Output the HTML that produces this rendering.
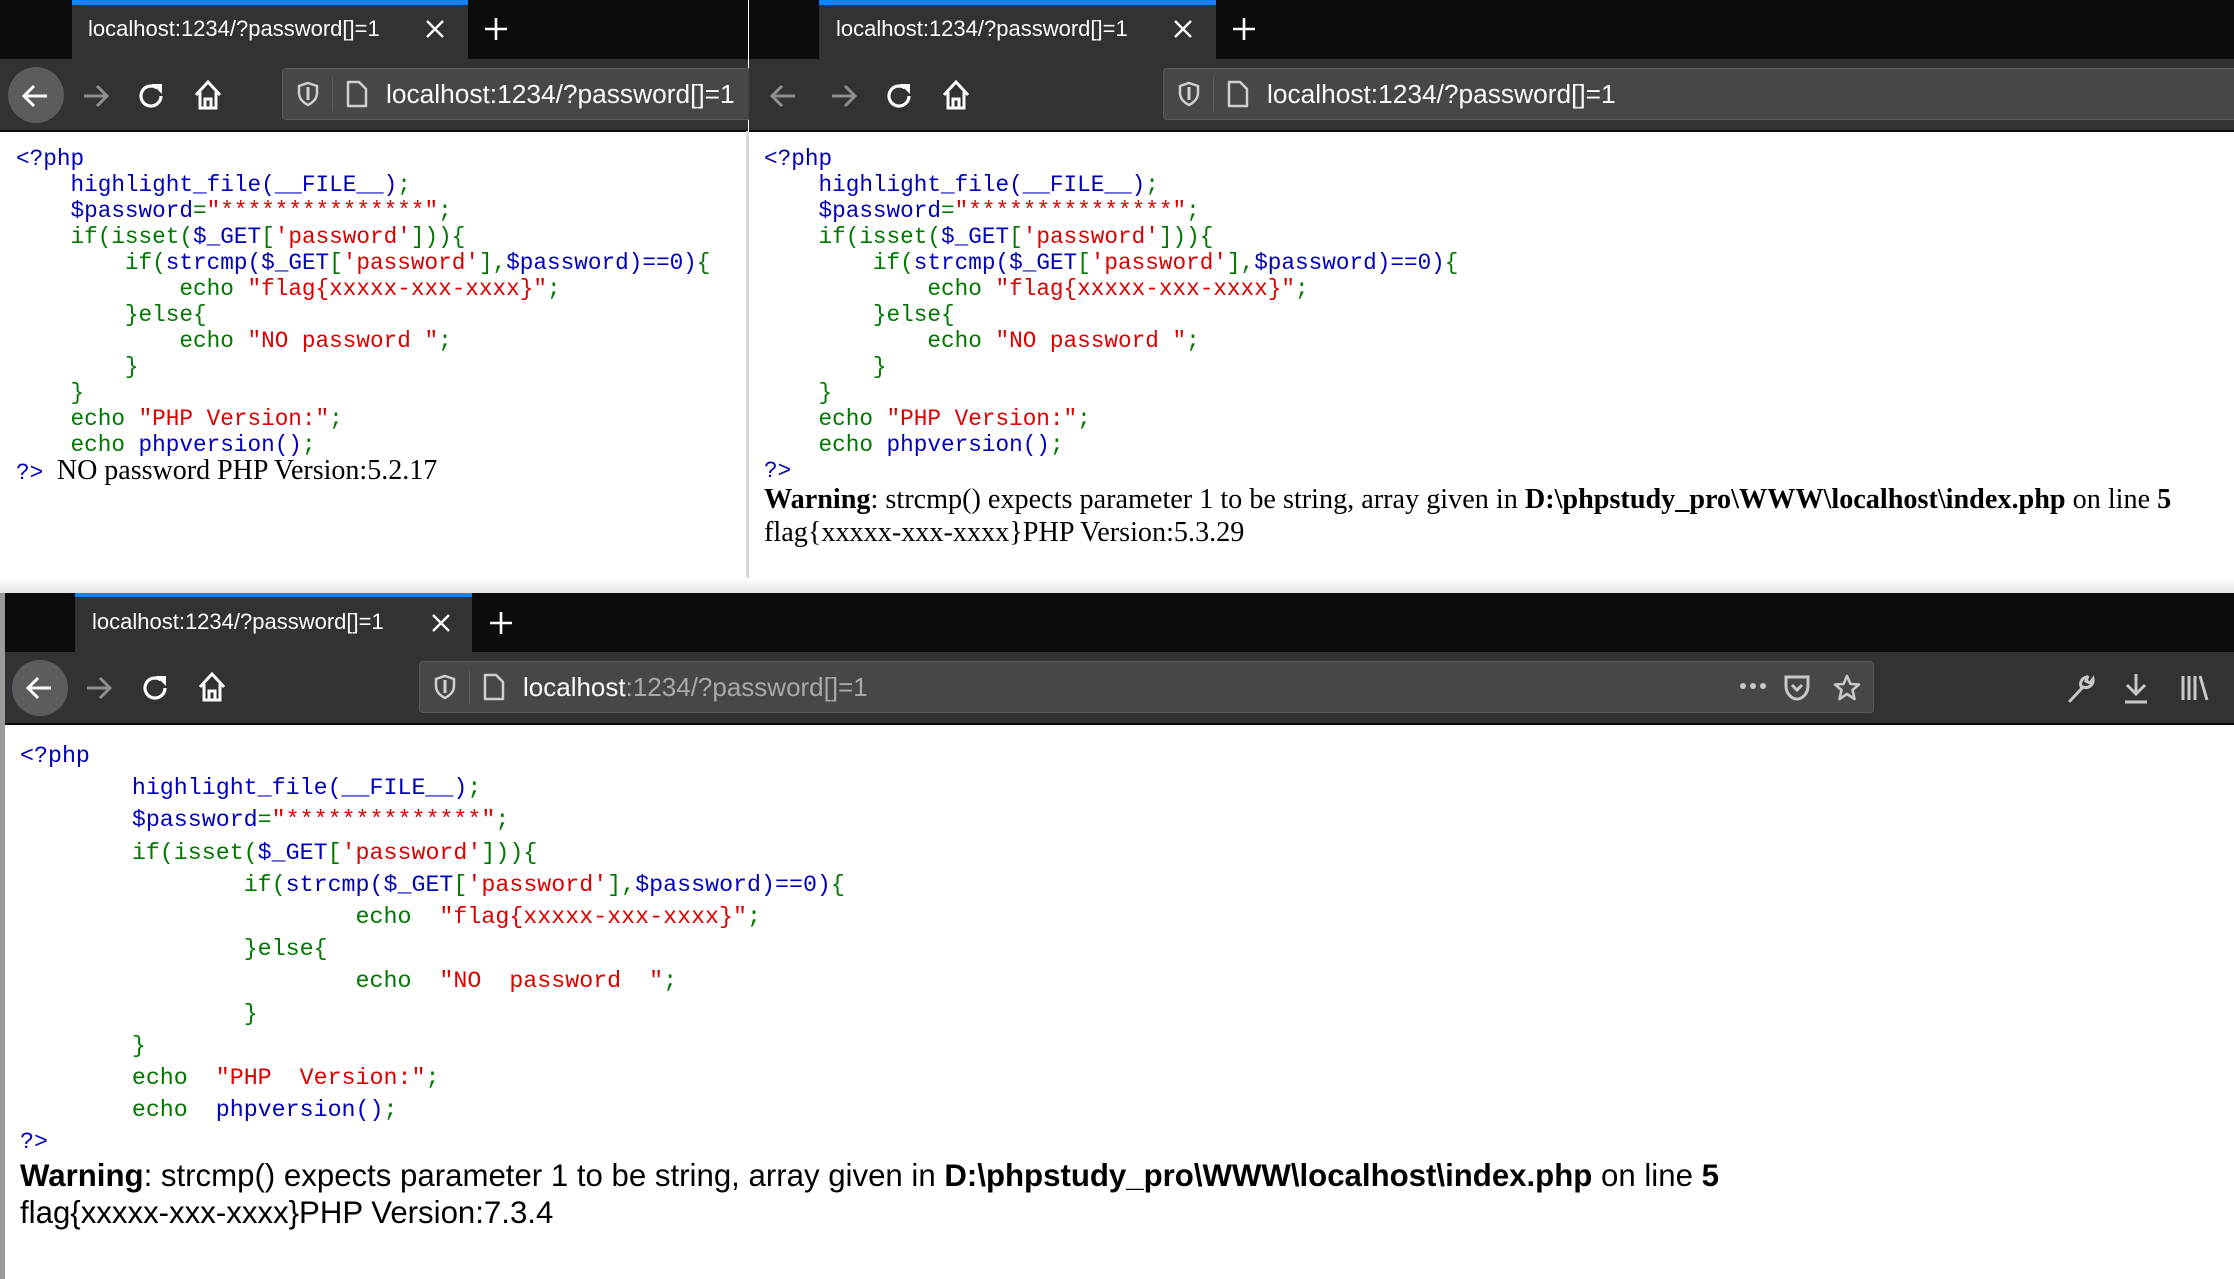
<!DOCTYPE html>
<html><head><meta charset="utf-8"><style>
*{margin:0;padding:0;box-sizing:border-box}
body{width:2234px;height:1279px;overflow:hidden;background:#fff;position:relative;font-family:"Liberation Sans",sans-serif}
.abs{position:absolute}
.tabbar{background:#0c0c0d}
.tab{position:absolute;background:#323234;color:#fbfbfe;font-size:22px;border-top:5px solid #0a84ff}
.tb{background:#323234;border-bottom:2px solid #0c0c0d}
.url{position:absolute;background:#474749;border:1px solid #5a5a5e;border-radius:4px;color:#fbfbfe;font-size:26.3px}
.b{color:#0000BB}.g{color:#007700}.r{color:#DD0000}
.code{position:absolute;font-family:"Liberation Mono",monospace;white-space:pre;font-size:22.7px;line-height:26px}
.code2{position:absolute;font-family:"Liberation Mono",monospace;white-space:pre;font-size:23.3px;line-height:32.2px}
svg{position:absolute}
</style></head><body>

<!-- TOP LEFT WINDOW -->
<div class="abs tabbar" style="left:0;top:0;width:748px;height:59px"></div>
<div class="tab" style="left:72px;top:0;width:396px;height:59px"><span class="abs" style="left:16px;top:11px">localhost:1234/?password[]=1</span></div>
<svg style="left:424px;top:18px" width="22" height="22" viewBox="0 0 22 22"><path d="M3 3L19 19M19 3L3 19" stroke="#fbfbfe" stroke-width="2.4"/></svg>
<svg style="left:483px;top:16px" width="26" height="26" viewBox="0 0 26 26"><path d="M13 2V24M2 13H24" stroke="#fbfbfe" stroke-width="2.6"/></svg>
<div class="abs tb" style="left:0;top:59px;width:748px;height:73px"></div>
<div class="abs" style="left:8px;top:67px;width:56px;height:56px;border-radius:50%;background:#5b5b60"></div>
<svg style="left:19px;top:79px" width="34" height="34" viewBox="0 0 34 34"><path d="M28 17H6M15 7L5 17L15 27" stroke="#fbfbfe" stroke-width="3" fill="none"/></svg>
<svg style="left:79px;top:79px" width="34" height="34" viewBox="0 0 34 34"><path d="M5 17H27M18 7L28 17L18 27" stroke="#8f8f94" stroke-width="3" fill="none"/></svg>
<svg style="left:136px;top:80px" width="32" height="32" viewBox="0 0 32 32"><path d="M25 16A10 10 0 1 1 21 8" stroke="#fbfbfe" stroke-width="3.2" fill="none"/><path d="M16 4H26V14Z" fill="#fbfbfe"/></svg>
<svg style="left:192px;top:78px" width="32" height="34" viewBox="0 0 32 34"><path d="M4 17L16 4L28 17M8 14V30H24V14M13 30V21H19V30" stroke="#fbfbfe" stroke-width="3" fill="none"/></svg>
<div class="url" style="left:282px;top:68px;width:470px;height:52px">
<svg style="left:14px;top:12px" width="22" height="26" viewBox="0 0 22 26"><path d="M11 2L20 5V12C20 18 15 22 11 24C7 22 2 18 2 12V5Z" stroke="#d0d0d4" stroke-width="2.5" fill="none"/><path d="M11 6V19" stroke="#d0d0d4" stroke-width="3"/></svg>
<div class="abs" style="left:49px;top:8px;width:1px;height:34px;background:#5e5e62"></div>
<svg style="left:62px;top:10px" width="24" height="30" viewBox="0 0 24 30"><path d="M3 3H14L21 10V27H3Z" stroke="#d0d0d4" stroke-width="2.5" fill="none" stroke-linejoin="round"/></svg>
<span class="abs" style="left:103px;top:10px">localhost:1234/?password[]=1</span></div>
<div class="abs" style="left:746px;top:131px;width:3px;height:460px;background:#d8d8d8"></div>
<div class="code" style="left:16px;top:146px"><span class="b">&lt;?php</span>
    <span class="b">highlight_file(__FILE__)</span><span class="g">;</span>
    <span class="b">$password</span><span class="g">=</span><span class="r">"***************"</span><span class="g">;</span>
    <span class="g">if(isset(</span><span class="b">$_GET</span><span class="g">[</span><span class="r">'password'</span><span class="g">])){</span>
        <span class="g">if(</span><span class="b">strcmp(</span><span class="b">$_GET</span><span class="g">[</span><span class="r">'password'</span><span class="g">],</span><span class="b">$password)==0)</span><span class="g">{</span>
            <span class="g">echo </span><span class="r">"flag{xxxxx-xxx-xxxx}"</span><span class="g">;</span>
        <span class="g">}else{</span>
            <span class="g">echo </span><span class="r">"NO password "</span><span class="g">;</span>
        <span class="g">}</span>
    <span class="g">}</span>
    <span class="g">echo </span><span class="r">"PHP Version:"</span><span class="g">;</span>
    <span class="g">echo </span><span class="b">phpversion()</span><span class="g">;</span>
<span class="b">?&gt;</span> <span style="font-family:'Liberation Serif',serif;font-size:28px;color:#000">NO password PHP Version:5.2.17</span></div>

<!-- TOP RIGHT WINDOW -->
<div class="abs tabbar" style="left:749px;top:0;width:1485px;height:59px"></div>
<div class="tab" style="left:819px;top:0;width:397px;height:59px"><span class="abs" style="left:17px;top:11px">localhost:1234/?password[]=1</span></div>
<svg style="left:1172px;top:18px" width="22" height="22" viewBox="0 0 22 22"><path d="M3 3L19 19M19 3L3 19" stroke="#fbfbfe" stroke-width="2.4"/></svg>
<svg style="left:1231px;top:16px" width="26" height="26" viewBox="0 0 26 26"><path d="M13 2V24M2 13H24" stroke="#fbfbfe" stroke-width="2.6"/></svg>
<div class="abs tb" style="left:749px;top:59px;width:1485px;height:73px"></div>
<svg style="left:767px;top:79px" width="34" height="34" viewBox="0 0 34 34"><path d="M28 17H6M15 7L5 17L15 27" stroke="#8f8f94" stroke-width="3" fill="none"/></svg>
<svg style="left:827px;top:79px" width="34" height="34" viewBox="0 0 34 34"><path d="M5 17H27M18 7L28 17L18 27" stroke="#8f8f94" stroke-width="3" fill="none"/></svg>
<svg style="left:884px;top:80px" width="32" height="32" viewBox="0 0 32 32"><path d="M25 16A10 10 0 1 1 21 8" stroke="#fbfbfe" stroke-width="3.2" fill="none"/><path d="M16 4H26V14Z" fill="#fbfbfe"/></svg>
<svg style="left:940px;top:78px" width="32" height="34" viewBox="0 0 32 34"><path d="M4 17L16 4L28 17M8 14V30H24V14M13 30V21H19V30" stroke="#fbfbfe" stroke-width="3" fill="none"/></svg>
<div class="url" style="left:1163px;top:68px;width:1080px;height:52px">
<svg style="left:14px;top:12px" width="22" height="26" viewBox="0 0 22 26"><path d="M11 2L20 5V12C20 18 15 22 11 24C7 22 2 18 2 12V5Z" stroke="#d0d0d4" stroke-width="2.5" fill="none"/><path d="M11 6V19" stroke="#d0d0d4" stroke-width="3"/></svg>
<div class="abs" style="left:49px;top:8px;width:1px;height:34px;background:#5e5e62"></div>
<svg style="left:62px;top:10px" width="24" height="30" viewBox="0 0 24 30"><path d="M3 3H14L21 10V27H3Z" stroke="#d0d0d4" stroke-width="2.5" fill="none" stroke-linejoin="round"/></svg>
<span class="abs" style="left:103px;top:10px">localhost:1234/?password[]=1</span></div>
<div class="code" style="left:764px;top:146px"><span class="b">&lt;?php</span>
    <span class="b">highlight_file(__FILE__)</span><span class="g">;</span>
    <span class="b">$password</span><span class="g">=</span><span class="r">"***************"</span><span class="g">;</span>
    <span class="g">if(isset(</span><span class="b">$_GET</span><span class="g">[</span><span class="r">'password'</span><span class="g">])){</span>
        <span class="g">if(</span><span class="b">strcmp(</span><span class="b">$_GET</span><span class="g">[</span><span class="r">'password'</span><span class="g">],</span><span class="b">$password)==0)</span><span class="g">{</span>
            <span class="g">echo </span><span class="r">"flag{xxxxx-xxx-xxxx}"</span><span class="g">;</span>
        <span class="g">}else{</span>
            <span class="g">echo </span><span class="r">"NO password "</span><span class="g">;</span>
        <span class="g">}</span>
    <span class="g">}</span>
    <span class="g">echo </span><span class="r">"PHP Version:"</span><span class="g">;</span>
    <span class="g">echo </span><span class="b">phpversion()</span><span class="g">;</span>
<span class="b">?&gt;</span></div>
<div class="abs" style="left:764px;top:483px;font-family:'Liberation Serif',serif;font-size:28.2px;line-height:33px;white-space:nowrap;color:#000"><b>Warning</b>: strcmp() expects parameter 1 to be string, array given in <b>D:\phpstudy_pro\WWW\localhost\index.php</b> on line <b>5</b><br>flag{xxxxx-xxx-xxxx}PHP Version:5.3.29</div>
<div class="abs" style="left:0;top:578px;width:2234px;height:15px;background:linear-gradient(#fff,#e4e4e4)"></div>

<!-- BOTTOM WINDOW -->
<div class="abs" style="left:0;top:593px;width:5px;height:686px;background:#9a9a9a"></div>
<div class="abs tabbar" style="left:5px;top:593px;width:2229px;height:59px"></div>
<div class="tab" style="left:75px;top:593px;width:397px;height:59px;border-top-width:4px"><span class="abs" style="left:17px;top:12px">localhost:1234/?password[]=1</span></div>
<svg style="left:430px;top:612px" width="22" height="22" viewBox="0 0 22 22"><path d="M3 3L19 19M19 3L3 19" stroke="#fbfbfe" stroke-width="2.4"/></svg>
<svg style="left:488px;top:610px" width="26" height="26" viewBox="0 0 26 26"><path d="M13 2V24M2 13H24" stroke="#fbfbfe" stroke-width="2.6"/></svg>
<div class="abs tb" style="left:5px;top:652px;width:2229px;height:73px"></div>
<div class="abs" style="left:12px;top:660px;width:56px;height:56px;border-radius:50%;background:#5b5b60"></div>
<svg style="left:23px;top:671px" width="34" height="34" viewBox="0 0 34 34"><path d="M28 17H6M15 7L5 17L15 27" stroke="#fbfbfe" stroke-width="3" fill="none"/></svg>
<svg style="left:82px;top:671px" width="34" height="34" viewBox="0 0 34 34"><path d="M5 17H27M18 7L28 17L18 27" stroke="#8f8f94" stroke-width="3" fill="none"/></svg>
<svg style="left:140px;top:672px" width="32" height="32" viewBox="0 0 32 32"><path d="M25 16A10 10 0 1 1 21 8" stroke="#fbfbfe" stroke-width="3.2" fill="none"/><path d="M16 4H26V14Z" fill="#fbfbfe"/></svg>
<svg style="left:196px;top:670px" width="32" height="34" viewBox="0 0 32 34"><path d="M4 17L16 4L28 17M8 14V30H24V14M13 30V21H19V30" stroke="#fbfbfe" stroke-width="3" fill="none"/></svg>
<div class="url" style="left:419px;top:661px;width:1455px;height:52px">
<svg style="left:14px;top:12px" width="22" height="26" viewBox="0 0 22 26"><path d="M11 2L20 5V12C20 18 15 22 11 24C7 22 2 18 2 12V5Z" stroke="#d0d0d4" stroke-width="2.5" fill="none"/><path d="M11 6V19" stroke="#d0d0d4" stroke-width="3"/></svg>
<div class="abs" style="left:49px;top:8px;width:1px;height:34px;background:#5e5e62"></div>
<svg style="left:62px;top:10px" width="24" height="30" viewBox="0 0 24 30"><path d="M3 3H14L21 10V27H3Z" stroke="#d0d0d4" stroke-width="2.5" fill="none" stroke-linejoin="round"/></svg>
<span class="abs" style="left:103px;top:10px;font-size:26px">localhost<span style="color:#a8a8ad">:1234/?password[]=1</span></span>
<svg style="left:1318px;top:17px" width="30" height="14" viewBox="0 0 30 14"><circle cx="5" cy="7" r="3" fill="#c8c8cc"/><circle cx="15" cy="7" r="3" fill="#c8c8cc"/><circle cx="25" cy="7" r="3" fill="#c8c8cc"/></svg>
<svg style="left:1363px;top:12px" width="28" height="28" viewBox="0 0 28 28"><path d="M3 3H25V12C25 20 19 25 14 25C9 25 3 20 3 12Z" stroke="#c8c8cc" stroke-width="3" fill="none"/><path d="M9 11L14 16L19 11" stroke="#c8c8cc" stroke-width="3" fill="none"/></svg>
<svg style="left:1412px;top:11px" width="30" height="30" viewBox="0 0 30 30"><path d="M15 3L18.5 11L27 11.5L20.5 17L22.5 26L15 21L7.5 26L9.5 17L3 11.5L11.5 11Z" stroke="#c8c8cc" stroke-width="2.6" fill="none" stroke-linejoin="round"/></svg>
</div>
<svg style="left:2066px;top:672px" width="32" height="32" viewBox="0 0 32 32"><path d="M4 29L17 15" stroke="#c8c8cc" stroke-width="3" stroke-linecap="round"/><path d="M16 16C13 12 15 6 21 5L22 4L20 9L24 11L27 7C28 13 22 17 17 15" stroke="#c8c8cc" stroke-width="3" fill="none"/></svg>
<svg style="left:2121px;top:671px" width="30" height="34" viewBox="0 0 30 34"><path d="M15 3V22M6 14L15 23L24 14M4 31H26" stroke="#c8c8cc" stroke-width="3" fill="none"/></svg>
<svg style="left:2179px;top:672px" width="30" height="32" viewBox="0 0 30 32"><path d="M4 4V28M10 4V28M16 4V28M21 4L28 28" stroke="#c8c8cc" stroke-width="3" fill="none"/></svg>
<div class="code2" style="left:20px;top:740px"><span class="b">&lt;?php</span>
        <span class="b">highlight_file(__FILE__)</span><span class="g">;</span>
        <span class="b">$password</span><span class="g">=</span><span class="r">"**************"</span><span class="g">;</span>
        <span class="g">if(isset(</span><span class="b">$_GET</span><span class="g">[</span><span class="r">'password'</span><span class="g">])){</span>
                <span class="g">if(</span><span class="b">strcmp(</span><span class="b">$_GET</span><span class="g">[</span><span class="r">'password'</span><span class="g">],</span><span class="b">$password)==0)</span><span class="g">{</span>
                        <span class="g">echo </span> <span class="r">"flag{xxxxx-xxx-xxxx}"</span><span class="g">;</span>
                <span class="g">}else{</span>
                        <span class="g">echo </span> <span class="r">"NO  password  "</span><span class="g">;</span>
                <span class="g">}</span>
        <span class="g">}</span>
        <span class="g">echo </span> <span class="r">"PHP  Version:"</span><span class="g">;</span>
        <span class="g">echo </span> <span class="b">phpversion()</span><span class="g">;</span>
<span class="b">?&gt;</span></div>
<div class="abs" style="left:20px;top:1157px;font-family:'Liberation Sans',sans-serif;font-size:31.2px;line-height:37px;white-space:nowrap;color:#000"><b>Warning</b>: strcmp() expects parameter 1 to be string, array given in <b>D:\phpstudy_pro\WWW\localhost\index.php</b> on line <b>5</b><br>flag{xxxxx-xxx-xxxx}PHP Version:7.3.4</div>
</body></html>
